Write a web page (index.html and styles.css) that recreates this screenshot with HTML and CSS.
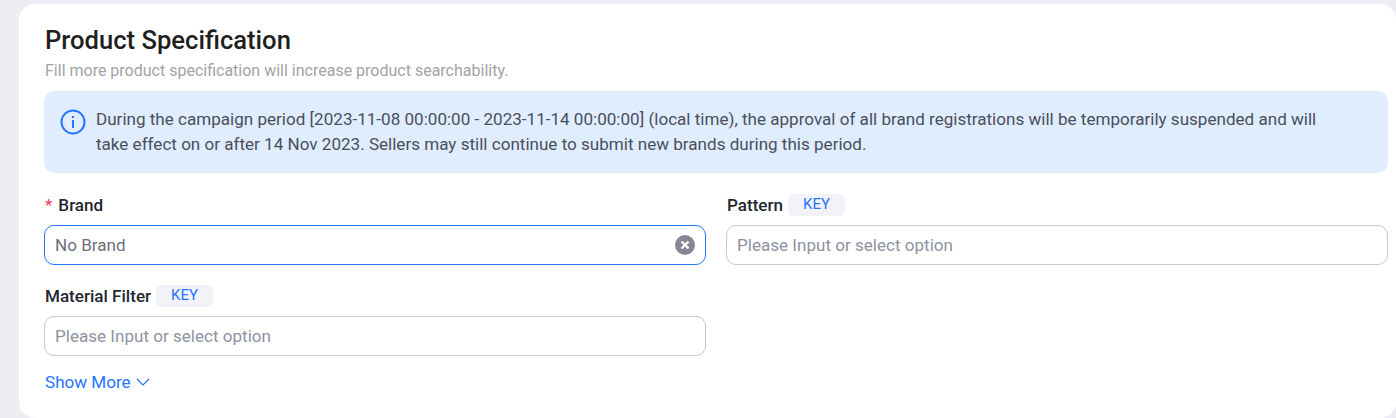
FILE: index.html
```html
<!DOCTYPE html>
<html lang="en">
<head>
  <meta charset="UTF-8">
  <meta name="viewport" content="width=device-width, initial-scale=1.0">
  <title>Product Specification</title>
  <link rel="stylesheet" href="styles.css">
</head>
<body>
  <div class="card">
    <div class="heading">Product Specification</div>
    <div class="subtext">Fill more product specification will increase product searchability.</div>
    <div class="notice">
      <svg class="notice-icon" width="26" height="26" viewBox="0 0 26 26" fill="none">
        <circle cx="13" cy="13" r="11.5" stroke="#2574ff" stroke-width="2"/>
        <rect x="12" y="11" width="2" height="8" fill="#2574ff"/>
        <rect x="12" y="7" width="2" height="2" fill="#2574ff"/>
      </svg>
      <div class="notice-text">During the campaign period [2023-11-08 00:00:00 - 2023-11-14 00:00:00] (local time), the approval of all brand registrations will be temporarily suspended and will take effect on or after 14 Nov 2023. Sellers may still continue to submit new brands during this period.</div>
    </div>
    <div class="fields">
      <div class="field">
        <div class="label"><span class="required">*</span>Brand</div>
        <div class="input active">
          <span class="value">No Brand</span>
          <svg class="clear" width="20" height="20" viewBox="0 0 20 20">
            <circle cx="10" cy="10" r="10" fill="#858796"/>
            <path d="M6.5 6.5l7 7M13.5 6.5l-7 7" stroke="#fff" stroke-width="2.4"/>
          </svg>
        </div>
      </div>
      <div class="field">
        <div class="label">Pattern<span class="key">KEY</span></div>
        <div class="input"><span class="placeholder">Please Input or select option</span></div>
      </div>
      <div class="field">
        <div class="label">Material Filter<span class="key">KEY</span></div>
        <div class="input"><span class="placeholder">Please Input or select option</span></div>
      </div>
    </div>
    <a class="more" href="#">Show More
      <svg width="14" height="8" viewBox="0 0 14 8" fill="none">
        <path d="M1 1l6 6 6-6" stroke="#2574ff" stroke-width="1.2"/>
      </svg>
    </a>
  </div>
</body>
</html>
```
FILE: styles.css
```css
html, body {
  height: 100%;
}
body {
  margin: 0;
  padding: 4px 0 0 19px;
  box-sizing: border-box;
  font-family: Roboto, Arial, sans-serif;
  background-color: #eceef4;
  overflow: hidden;
}
.card {
  background: white;
  border-radius: 16px;
  padding: 20px 8px 0 25px;
  height: 414px;
  box-sizing: border-box;
}
.heading {
  font-size: 25.6px;
  font-weight: 500;
  line-height: 32px;
  padding-left: 1px;
  color: #1f1f1f;
}
.subtext {
  font-size: 16px;
  line-height: 20px;
  margin-top: 5px;
  padding-left: 1px;
  color: #a3a3a3;
}
.notice {
  display: flex;
  gap: 9px;
  margin-top: 10px;
  padding: 17px 60px 0 16px;
  height: 82px;
  box-sizing: border-box;
  background: #e0edff;
  border-radius: 10px;
}
.notice-icon {
  flex: none;
  margin-top: 1px;
}
.notice-text {
  font-size: 17.07px;
  line-height: 25px;
  margin-top: -1px;
  padding-left: 1px;
  color: #4a4f5c;
}
.fields {
  display: grid;
  grid-template-columns: 662px 662px;
  column-gap: 20px;
  row-gap: 19px;
  margin-top: 20px;
}
.label {
  display: flex;
  align-items: center;
  height: 24px;
  margin-bottom: 8px;
  padding-left: 1px;
  font-size: 17.07px;
  font-weight: 500;
  color: #23262f;
}
.required {
  color: #f0415a;
  font-weight: 400;
  margin-right: 6px;
}
.key {
  margin-left: 5px;
  padding: 0 15px;
  height: 22px;
  line-height: 20px;
  background: #f1f3f8;
  border-radius: 5px;
  font-size: 15px;
  font-weight: 400;
  color: #2574ff;
}
.input {
  display: flex;
  align-items: center;
  justify-content: space-between;
  height: 40px;
  box-sizing: border-box;
  padding: 0 10px 0 10px;
  border: 1px solid #c6c8d2;
  border-radius: 10px;
  font-size: 17.07px;
}
.input.active {
  border-color: #2574ff;
}
.value {
  color: #6c6f7b;
}
.placeholder {
  color: #8f929f;
}
.more {
  display: inline-flex;
  align-items: center;
  gap: 5px;
  margin-top: 15px;
  padding-left: 1px;
  font-size: 17.07px;
  line-height: 22px;
  color: #2574ff;
  text-decoration: none;
}
```
